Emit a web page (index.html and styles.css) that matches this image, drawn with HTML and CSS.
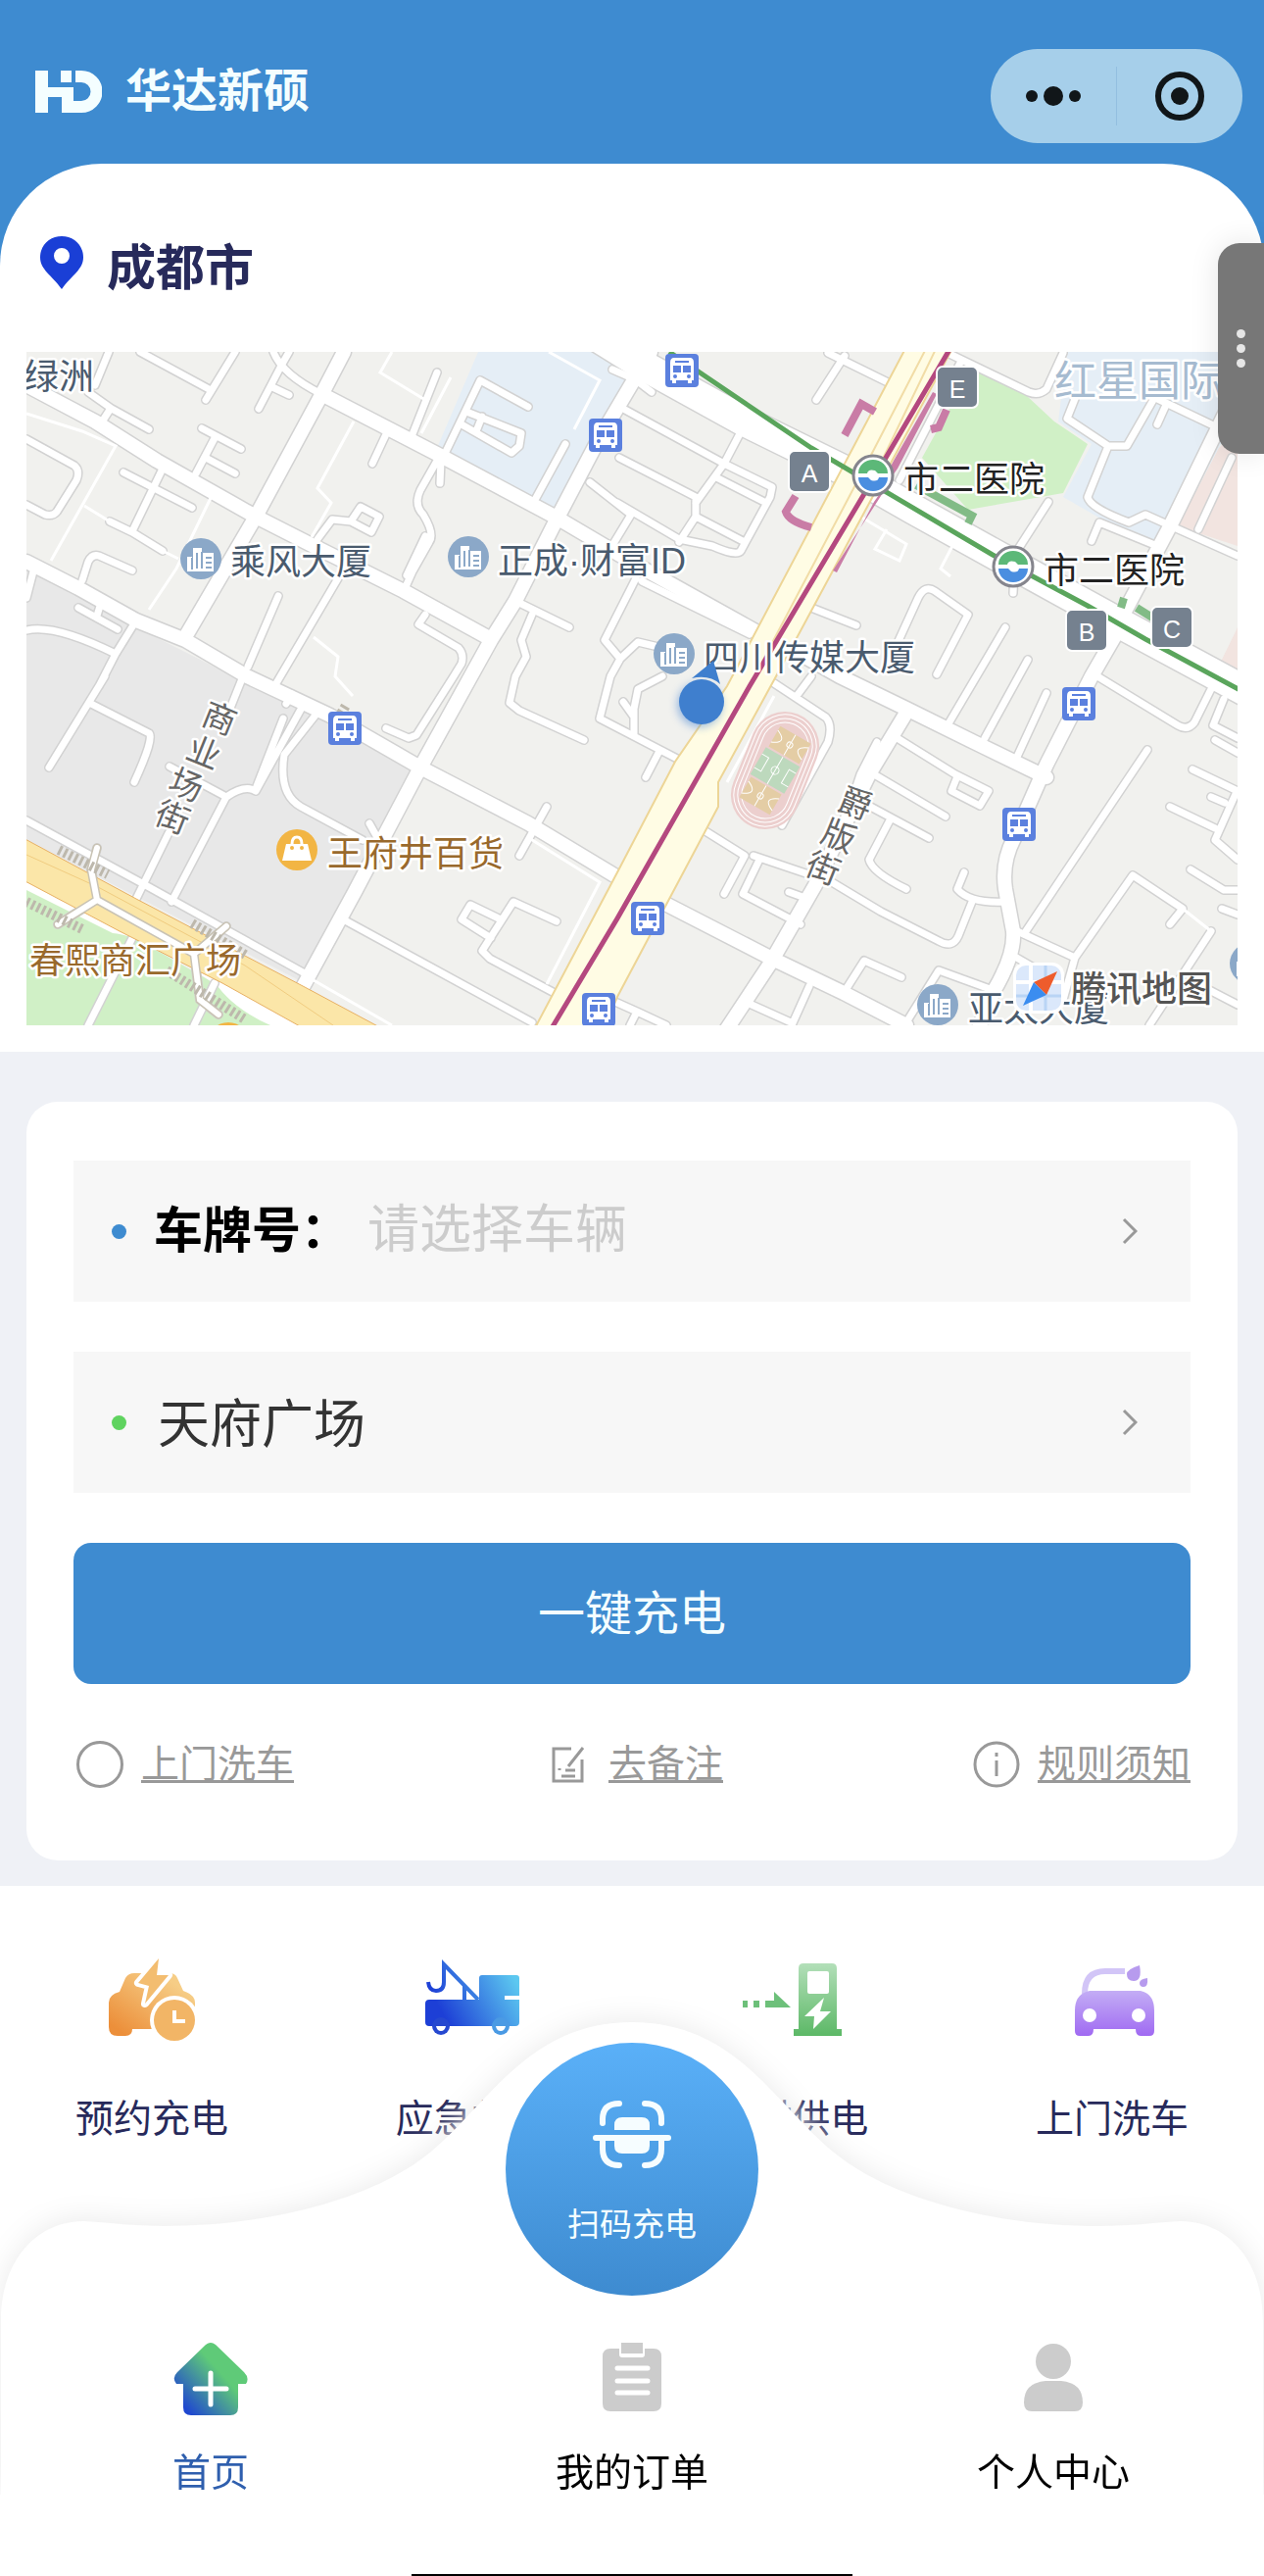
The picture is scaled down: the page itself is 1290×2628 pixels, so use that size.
FILE: index.html
```html
<!DOCTYPE html>
<html lang="zh-CN">
<head>
    <meta charset="UTF-8" />
    <meta name="viewport" content="width=device-width, initial-scale=1" />
    <title>华达新硕</title>
    <link rel="stylesheet" href="styles.css">
</head>
<body>
    <!--顶部-->
    <header class="header">
        <h1 class="brand">
            <svg class="brand-logo" viewBox="0 0 68 43" aria-hidden="true">
                <path d="M0 0h13v17h26v10H13v16H0z" fill="#f4feff"/>
                <path d="M26 0h11v12H26z" fill="#f4feff"/>
                <path d="M41 6h6a15.500 15.500 0 0 1 0 31H33V20" fill="none" stroke="#f4feff" stroke-width="12"/>
            </svg>
            华达新硕
        </h1>
        <div class="capsule">
            <button type="button" aria-label="更多">
                <svg width="60" height="60" viewBox="0 0 60 60"><circle cx="8" cy="30" r="6"/><circle cx="30" cy="30" r="10"/><circle cx="52" cy="30" r="6"/></svg>
            </button>
            <button type="button" aria-label="关闭">
                <svg width="60" height="60" viewBox="0 0 60 60"><circle cx="30" cy="30" r="22" fill="none" stroke="#111619" stroke-width="6"/><circle cx="30" cy="30" r="9"/></svg>
            </button>
        </div>
    </header>

    <!--定位和地图-->
    <section class="panel">
        <div class="city">
            <svg width="44" height="54" viewBox="0 0 44 54" aria-hidden="true"><path fill="#1a3fd6" fill-rule="evenodd" d="M22 0C10 0 0 9 0 21.500 0 34 12 40 22 54 32 40 44 34 44 21.500 44 9 34 0 22 0zm0 12a8 8 0 1 1 0 16 8 8 0 0 1 0-16z"/></svg>
            <span>成都市</span>
        </div>
        <svg class="map" viewBox="27 359 1236 687">
            <defs>
                <g id="road-s">
                    <path d="M111 359L97 393M90 400L114 417L152 438M112 418L103 432M143 359L215 398M240 359L210 408M295 359L287 373L264 417M278 395L295 403M279 359Q288 382 328 402"/>
                    <path d="M206 437L246 458M219 447L200 483M210 467L240 483M27 448L76 475Q82 480 78 490L58 522Q54 527 46 525L27 515M126 482L196 518M166 478L135 542M112 532L135 543L166 562M84 592L90 573Q94 565 101 567L135 582"/>
                    <path d="M324 550L339 530L358 532L379 543L387 527L368 517L358 532M394 443L380 473M446 380L421 443M539 415L490 388L452 467M476 420L532 442L530 455L522 462L471 433M492 425L486 440M577 453L547 508M625 377L648 387"/>
                    <path d="M446 470L429 500Q422 515 432 525Q444 545 438 553L421 583L412 603M450 470L449 493M434 547L415 587M434 627L427 637L468 661Q474 668 471 677L463 690L425 750L417 753L394 743M530 615L581 640M543 627L532 653L537 670L526 690L520 717L530 725L596 755M345 590L282 697M284 608L253 680"/>
                    <path d="M602 492L644 525L627 553M632 467L710 507V527L693 553M638 418L739 473L788 497L786 507L756 562Q752 568 727 557L693 550L630 513M760 433L739 473L710 513M731 487L782 513M710 527L760 553M648 387L665 400M862 363L833 408M845 360L910 392"/>
                    <path d="M655 593L765 647M649 590L617 653L633 672L651 655L672 660M633 672L623 690L612 733L693 775M672 768L659 793M676 690L651 703L647 723V750M636 716L646 730M828 620L874 638M905 680L937 610Q944 596 954 603L988 627L956 688M1026 640L967 740M1049 673L1005 753M1068 707L1038 772M1070 512L1036 565L1034 605"/>
                    <path d="M967 360L1050 400Q1060 404 1068 397L1085 360M980 370L918 490M1097 407L1089 427L1131 455H1150L1177 408M1173 403L1236 433M1190 413L1181 433M1131 455L1110 507Q1112 518 1152 533L1169 525L1263 567M1114 552L1122 533L1181 557M1257 467L1223 540"/>
                    <path d="M1120 690L1202 740Q1212 746 1219 737L1236 703M1249 713L1238 740L1263 753M1240 755L1263 768M1171 765L1047 950M1217 785L1263 807M1194 823L1240 845M1236 813L1250 819M1261 810L1240 857L1263 877M1215 887L1249 908H1263M1247 927L1263 933"/>
                    <path d="M1038 950L1097 977L1156 893L1207 927L1194 943M1097 977L1085 1020M1236 950L1173 1046M984 890L977 907Q990 922 1026 920M992 920L978 955Q972 968 958 960L899 930L849 900L769 873M775 877L758 912L817 943M805 910L819 915M720 848L760 873L739 912M1215 1000L1263 1025M1034 975L1060 990"/>
                    <path d="M895 757L878 790L868 820M914 752L975 790L1009 807L1000 822L971 807L977 792M887 787L965 833M883 820L948 855M908 837L887 877Q890 890 925 907M790 697L843 732Q850 740 845 757L798 842M828 690L813 710M767 1025L807 1043M826 1006L808 1046M861 1013L882 980L920 997M925 1043L958 990L1013 1010M630 1023L650 1032L643 1046M650 1032L680 1046"/>
                    <path d="M107 690L50 783M93 718L152 748Q158 752 137 798M27 837L143 900L311 993M248 690L234 725M172 850L139 917M231 813L175 920M173 782L231 813Q250 800 261 807L309 720M262 802L289 733M324 727L290 770Q284 810 307 823L370 857M292 718L298 708M377 840L387 858M139 633L118 667L101 700M27 643Q55 636 118 667M34 583L27 610M103 615L99 628M80 620L120 642"/>
                    <path d="M558 823L530 873M354 940L543 1043M568 940L524 920L492 970L500 978L564 1012M509 937L480 923L471 938L501 957M135 957L90 1046M219 1003L198 1046"/>
                    <path d="M99 865L93 887L99 918L59 943M99 918L198 973L231 945M198 973L204 1020L223 1035"/>
                </g>
                <g id="road-m">
                    <path d="M27 393L97 430L160 470L261 527L320 557L412 603L501 652M328 402L446 463L568 528L651 577L773 645M351 359L328 403L261 527L189 650M27 573L80 600L139 633L189 653L252 690L337 730L429 783L539 840L627 893M664 359L610 450L568 530L526 613L501 653L429 783L362 910L309 1007"/>
                    <path d="M1256 410L1194 537L1143 633M1143 640L1114 690L1068 780L1035 855Q1022 880 1026 907L1034 950Q1036 975 1013 1013L1000 1046M795 655L857 690L925 723L1000 760L1068 793M681 923L786 977L861 1013L925 1046M925 727L887 790L832 903L786 983L735 1060"/>
                </g>
                <g id="road-l"><path d="M610 344L655 372L760 430L870 484L933 520L1034 576L1143 636L1280 710"/></g>
                <symbol id="bus" viewBox="0 0 34 34">
                    <rect width="34" height="34" rx="4" fill="#5b80de"/>
                    <path fill="#fff" d="M9 4h16q4 0 4 5v18h-2v3h-4v-3H11v3H7v-3H5V9q0-5 4-5z"/>
                    <path fill="#5b80de" d="M10 7h14v2H10zM8 12h8v7H8zm10 0h8v7h-8z"/><circle cx="10" cy="23" r="2" fill="#5b80de"/><circle cx="24" cy="23" r="2" fill="#5b80de"/>
                </symbol>
                <symbol id="tower" viewBox="0 0 44 44">
                    <circle cx="22" cy="22" r="21" fill="#8ba8c8"/>
                    <path fill="#fff" d="M8 20h5v12H8zm6-9h9v5h12v19H8v-3h6z"/>
                    <path stroke="#8ba8c8" stroke-width="2" d="M13 21v12M18 16v16M23 15v17M27 21h6M27 26h6M27 31h6"/>
                </symbol>
                <symbol id="metro" viewBox="0 0 46 46">
                    <circle cx="23" cy="23" r="20" fill="#fff" stroke="#85858d" stroke-width="3"/>
                    <path fill="#5cb878" d="M8 21a15 14 0 0 1 30 0H28l-3-3q-7-2-8 3z"/>
                    <path fill="#4a8ee0" d="M38 25a15 14 0 0 1-30 0h10l3 3q7 2 8-3z"/>
                </symbol>
            </defs>
            <rect x="27" y="359" width="1236" height="687" fill="#f1f1ee"/>
            <path fill="#e8e8e8" d="M27 580L139 640L252 697L337 737L424 787L311 1003L27 857z"/>
            <path fill="#e5eef6" d="M488 359H630L650 375L568 525L446 457zM1089 359H1263V420L1202 537L1177 560L1085 507L1114 453L1080 430z"/>
            <path fill="#f2e4e0" d="M1244 457L1263 440V557L1202 537zM1263 640L1246 675L1263 690z"/>
            <path fill="#d0f0c6" d="M996 378L1047 403L1076 430L1110 453L1085 503L988 520L941 467L967 420zM27 905L122 948L222 1005L280 1046H27z"/>
            <path fill="#fff" d="M27 896L122 946L227 1000L320 1046H276Q240 1030 222 1006Q150 955 115 952L27 908z"/>

            <use href="#road-l" class="edge road-l"/>
            <use href="#road-s" class="edge road-s"/>
            <use href="#road-m" class="edge road-m"/>
            <use href="#road-l" class="fill road-l"/>
            <use href="#road-s" class="fill road-s"/>
            <use href="#road-m" class="fill road-m"/>
            <path class="lane" d="M27 422L84 440L118 455L52 572M86 516L112 532M215 508L180 580L152 622M361 430L324 498L338 513L318 548M400 359L388 380L434 408M460 385L430 442M560 359L612 388L586 438M320 650L345 670L342 690L360 710M320 1000L400 1046M540 855L612 900L558 1004M790 710L742 798M880 528L925 555L918 572L893 560L905 540M972 557L960 580L970 588M1207 927L1236 950M166 562L182 570"/>

            <path fill="#fbe6a8" stroke="#e7b064" d="M20 853L139 917L311 1007L395 1052H315L227 1003L122 950L20 896z"/>
            <path fill="none" stroke="#f0cc80" d="M27 872L100 905L250 985L340 1046"/>
            <path class="bridge-edge" d="M99 865L93 887L99 918L59 943M99 918L198 973L231 945M198 973L204 1020L223 1035"/>
            <path class="bridge" d="M99 865L93 887L99 918L59 943M99 918L198 973L231 945M198 973L204 1020L223 1035"/>
            <path class="stairs" d="M60 867L110 892M27 920L84 948M196 942L252 975M170 990L250 1040M348 728L354 718"/>

            <path fill="#fffce4" stroke="#edd596" stroke-width="2" d="M927 350L742 700L689 777L630 890L540 1060H612L630 1017L733 823V798L792 690L975 350z"/>
            <path fill="none" stroke="#f1dca6" stroke-width="2" d="M948 350L886 470L770 690M958 350L900 470"/>
            <path fill="#c97ca6" d="M952 400L912 470L903 487L908 492L850 582L854 584L892 512L916 478L956 402z"/>
            <path fill="none" stroke="#c97ca6" stroke-width="8" d="M862 444L879 412L893 420M966 418L958 436L950 438M812 506L802 522Q805 532 828 538"/>
            <path fill="none" stroke="#82bb86" stroke-width="8" d="M935 495L992 526L988 534M1147 610L1144 620M1160 620L1176 630"/>

            <!--运动场-->
            <g transform="translate(791 786) rotate(22)">
                <rect x="-35" y="-62" width="70" height="124" rx="35" fill="#eccfce"/>
                <rect x="-32" y="-59" width="64" height="118" rx="32" class="track"/>
                <rect x="-28" y="-55" width="56" height="110" rx="28" class="track"/>
                <rect x="-24" y="-51" width="48" height="102" rx="24" class="track"/>
                <g transform="rotate(8)">
                    <path d="M-18-42h36v24h-36zM-18 18h36v24h-36z" fill="#e4cda5"/><path d="M-20-16h40v32h-40z" fill="#bdd9bd"/>
                    <path class="track" d="M0-42v24M0-16v32M0 18v24M-20-8h8v16h-8M20-8h-8v16h8M-18-37q16 7 0 14M18-37q-16 7 0 14M-18 23q16 7 0 14M18 23q-16 7 0 14"/><circle r="4" class="track"/><circle cy="-30" r="3" class="track"/><circle cy="30" r="3" class="track"/>
                </g>
            </g>

            <!--地铁线-->
            <path fill="none" stroke="#5aa55c" stroke-width="5" d="M683 359L828 457L891 494L1013 566L1110 618L1169 652L1275 709"/>
            <path fill="none" stroke="#b4487f" stroke-width="5" d="M970 355L904 467L765 700L630 937L560 1054"/>

            <use href="#bus" x="679" y="361" width="34" height="34"/>
            <use href="#bus" x="601" y="427" width="34" height="34"/>
            <use href="#bus" x="335" y="726" width="34" height="34"/>
            <use href="#bus" x="1084" y="701" width="34" height="34"/>
            <use href="#bus" x="1023" y="824" width="34" height="34"/>
            <use href="#bus" x="644" y="920" width="34" height="34"/>
            <use href="#bus" x="594" y="1013" width="34" height="34"/>
            <use href="#tower" x="183" y="548" width="44" height="44"/>
            <use href="#tower" x="456" y="546" width="44" height="44"/>
            <use href="#tower" x="666" y="645" width="44" height="44"/>
            <use href="#tower" x="935" y="1003" width="44" height="44"/>
            <use href="#tower" x="1254" y="961" width="44" height="44"/>
            <use href="#metro" x="868" y="462" width="46" height="46"/>
            <use href="#metro" x="1011" y="555" width="46" height="46"/>

            <g class="exit">
                <rect x="805" y="460" width="42" height="42" rx="6"/><text x="826" y="492">A</text>
                <rect x="956" y="374" width="42" height="42" rx="6"/><text x="977" y="406">E</text>
                <rect x="1088" y="622" width="42" height="42" rx="6"/><text x="1109" y="654">B</text>
                <rect x="1175" y="619" width="42" height="42" rx="6"/><text x="1196" y="651">C</text>
            </g>

            <circle cx="303" cy="867" r="21" fill="#f2b544"/>
            <path fill="#fff" d="M292 861h22l4 17h-30z"/><path fill="none" stroke="#fff" stroke-width="3" d="M298 861q0-7 5-7t5 7"/>
            <circle cx="298" cy="865" r="2" fill="#f2b544"/><circle cx="308" cy="865" r="2" fill="#f2b544"/>
            <circle cx="233" cy="1064" r="21" fill="#f2b544"/>

            <g class="poi">
                <text x="24" y="397">绿洲</text>
                <text x="235" y="586">乘风大厦</text>
                <text x="508" y="585">正成·财富ID</text>
                <text x="718" y="684">四川传媒大厦</text>
                <text x="988" y="1042">亚太大厦</text>
            </g>
            <g class="poi poi-metro">
                <text x="922" y="502">市二医院</text>
                <text x="1065" y="595">市二医院</text>
            </g>
            <g class="poi poi-shop">
                <text x="334" y="884">王府井百货</text>
                <text x="30" y="993">春熙商汇广场</text>
            </g>
            <g class="poi poi-area"><text x="1076" y="404">红星国际</text></g>
            <g class="poi poi-street">
                <text transform="translate(224 733) rotate(22)" y="12">商</text>
                <text transform="translate(208 768) rotate(22)" y="12">业</text>
                <text transform="translate(190 801) rotate(22)" y="12">场</text>
                <text transform="translate(176 834) rotate(22)" y="12">街</text>
                <text transform="translate(873 820) rotate(22)" y="12">爵</text>
                <text transform="translate(856 853) rotate(22)" y="12">版</text>
                <text transform="translate(840 886) rotate(22)" y="12">街</text>
            </g>

            <!--当前位置-->
            <circle cx="714" cy="719" r="23" class="glow"/>
            <path fill="#3f7fce" d="M728 674L735 698Q724 688 706 692z"/>
            <circle cx="716" cy="716" r="23" fill="#3f7fce"/>

            <rect x="1034" y="982" width="52" height="52" rx="12" fill="#fff"/>
            <rect x="1037" y="985" width="46" height="46" rx="10" fill="#dbe8fb"/>
            <path stroke="#fff" stroke-width="4" d="M1052 985v46M1037 1002h46"/><path stroke="#b9d4f5" stroke-width="3" d="M1067 985v46M1037 1016h46"/>
            <path fill="#ee5c2c" d="M1079 991L1068 1015L1055 1002z"/><path fill="#3b8df0" d="M1044 1026L1055 1002L1068 1015z"/>
            <g class="poi poi-logo"><text x="1093" y="1022">腾讯地图</text></g>
        </svg>
    </section>
    <button class="handle" type="button" aria-label="展开"><i></i><i></i><i></i></button>

    <!--下单-->
    <main class="order">
        <form class="card">
            <label class="field">
                <i class="dot"></i>
                <span class="field-name">车牌号：</span>
                <input type="text" placeholder="请选择车辆" readonly>
                <svg class="arrow" viewBox="0 0 16 28" aria-hidden="true"><path d="M2 2l12 12L2 26"/></svg>
            </label>
            <label class="field">
                <i class="dot dot-green"></i>
                <input type="text" value="天府广场" aria-label="充电地点" readonly>
                <svg class="arrow" viewBox="0 0 16 28" aria-hidden="true"><path d="M2 2l12 12L2 26"/></svg>
            </label>
            <button class="submit" type="button">一键充电</button>
            <div class="extras">
                <label class="extra"><input type="radio" name="wash"><span>上门洗车</span></label>
                <a class="extra" href="#">
                    <svg viewBox="0 0 48 48" aria-hidden="true"><path d="M28 8H10v33h29V19M40 7L25 26M16 28v2M18 36h14M22 30h10"/></svg>
                    <span>去备注</span>
                </a>
                <a class="extra" href="#">
                    <svg viewBox="0 0 48 48" aria-hidden="true"><circle cx="24" cy="24" r="22"/><path d="M24 20v16M24 12v4"/></svg>
                    <span>规则须知</span>
                </a>
            </div>
        </form>
    </main>

    <!--服务入口-->
    <section class="services">
        <a href="#">
            <svg viewBox="0 0 102 102" aria-hidden="true">
                <defs><linearGradient id="g1" x1="0" y1="1" x2="1" y2="0"><stop offset=".1" stop-color="#ec8f3a"/><stop offset=".8" stop-color="#f6cd86"/></linearGradient></defs>
                <path fill="url(#g1)" d="M18 42l6-14q3-5 9-5h36q6 0 8 5l6 13q12 4 12 12v27H31q0 7-7 7h-8q-9 0-9-9V53q0-8 11-11z"/>
                <path fill="#fff" stroke="#fff" stroke-width="8" stroke-linejoin="round" d="M58 9L37 33l11 3-4 18 24-29H56z"/>
                <path fill="#f3bd70" d="M58 8L37 33l11 3-4 18 24-29H56z"/>
                <circle cx="74" cy="71" r="25" fill="#fff"/><circle cx="74" cy="71" r="21" fill="#f2b566"/>
                <path fill="none" stroke="#fff" stroke-width="4" d="M74 61v11h11"/>
            </svg>
            <span>预约充电</span>
        </a>
        <a href="#">
            <svg viewBox="0 0 102 102" aria-hidden="true">
                <defs><linearGradient id="g2" gradientUnits="userSpaceOnUse" x1="10" y1="75" x2="95" y2="30"><stop offset=".15" stop-color="#1d3fd6"/><stop offset="1" stop-color="#5cc8f0"/></linearGradient></defs>
                <path fill="none" stroke="url(#g2)" stroke-width="4" d="M6 32q1 9 8 9 8 0 8-9V14l35 36M43 36v15"/>
                <path fill="url(#g2)" d="M7 50h51V28q0-3 3-3h35q3 0 3 3v45q0 4-4 4H7q-4 0-4-4V54q0-4 4-4z"/>
                <path stroke="#fff" stroke-width="4" d="M84 48h15"/>
                <circle cx="19" cy="77" r="9" fill="#2548d0"/><circle cx="80" cy="77" r="9" fill="#4a9ae4"/>
                <path fill="#fff" d="M14 77h10q-1 5-5 5t-5-5zM75 77h10q-1 5-5 5t-5-5z"/>
            </svg>
            <span>应急救援</span>
        </a>
        <a href="#">
            <svg viewBox="0 0 102 102" aria-hidden="true">
                <defs><linearGradient id="g3" x1="0" y1="0" x2="0" y2="1"><stop offset="0" stop-color="#b3dfb9"/><stop offset="1" stop-color="#5cb866"/></linearGradient></defs>
                <path fill="url(#g3)" fill-rule="evenodd" d="M63 13h29q5 0 5 5v62h5v7H53v-7h5V18q0-5 5-5zm6 8q-2 0-2 2v19q0 2 2 2h18q2 0 2-2V23q0-2-2-2zM84 48L64 67h10l-1 13 18-18H80z"/>
                <path fill="#6dc07a" d="M1 51h5v7H1zm11 0h6v7h-6zm12 0h9v-9l17 16H24z"/>
            </svg>
            <span>临时供电</span>
        </a>
        <a href="#">
            <svg viewBox="0 0 102 102" aria-hidden="true">
                <defs><linearGradient id="g4" x1="0" y1="0" x2="0" y2="1"><stop offset="0" stop-color="#c3adf5"/><stop offset="1" stop-color="#a06af2"/></linearGradient></defs>
                <path fill="none" stroke="#d2c5f7" stroke-width="6" d="M23 44Q23 21 44 21h20"/>
                <path fill="url(#g4)" d="M28 41h52q14 3 14 20v21q0 5-5 5h-9q-5 0-5-7H32q0 7-5 7h-9q-5 0-5-5V61q0-17 15-20z"/>
                <circle cx="28" cy="66" r="7" fill="#fff"/><circle cx="78" cy="66" r="7" fill="#fff"/>
                <path fill="#b79bee" d="M79 15q3 16-6 16-7 0-7-7 0-5 13-9zM87 28q1 9-4 9-4 0-4-4t8-5z"/>
            </svg>
            <span>上门洗车</span>
        </a>
    </section>

    <!--底部导航-->
    <nav class="tabbar">
        <svg class="tabbar-bg" viewBox="0 0 1290 482" preserveAspectRatio="none" aria-hidden="true">
            <path fill="#fff" d="M1 482V305C1 240 40 203 85 203C110 204 135 208 168 208C270 208 380 182 440 132C500 82 540 0 645 0C750 0 790 82 850 132C910 182 1020 208 1122 208C1155 208 1180 204 1205 203C1250 203 1289 240 1289 305V482z"/>
        </svg>
        <button class="scan" type="button">
            <svg width="80" height="72" viewBox="0 0 80 72" aria-hidden="true">
                <g fill="none" stroke="#f6fdff" stroke-width="6" stroke-linecap="round"><path d="M10 24V20Q10 4 27 4M70 24V20Q70 4 53 4M10 42v8q0 17 17 17M70 42v8q0 17-17 17M3 39h74"/></g>
                <path fill="#f6fdff" d="M22 31v-5q0-8 8-8h20q8 0 8 8v5zM22 42h36v5q0 8-8 8H30q-8 0-8-8z"/>
            </svg>
            扫码充电
        </button>
        <ul class="tabs">
            <li class="on"><a href="#">
                <svg viewBox="0 0 80 80" aria-hidden="true">
                    <defs><linearGradient id="g5" x1="0" y1=".9" x2=".8" y2=".2"><stop offset=".1" stop-color="#1f47d0"/><stop offset=".75" stop-color="#5fca78"/></linearGradient></defs>
                    <path fill="url(#g5)" d="M35 5q5-4 10 0l29 28q6 6 2 12h-8v24q0 8-8 8H20q-8 0-8-8V45H5q-5-6 1-12z"/>
                    <path stroke="#fff" stroke-width="5" stroke-linecap="round" d="M40 34v32M24 50h32"/>
                </svg>
                首页</a></li>
            <li><a href="#">
                <svg viewBox="0 0 80 80" aria-hidden="true">
                    <path fill="#ccc" d="M18 9h9v6q0 3 3 3h20q3 0 3-3V9h9q8 0 8 8v48q0 8-8 8H18q-8 0-8-8V17q0-8 8-8z"/><path fill="#ccc" d="M29 3h22v11H29z"/>
                    <path stroke="#fff" stroke-width="5" stroke-linecap="round" d="M25 29h31M25 42h31M25 54h31"/>
                </svg>
                我的订单</a></li>
            <li><a href="#">
                <svg viewBox="0 0 80 80" aria-hidden="true"><circle cx="40" cy="22" r="18" fill="#ccc"/><path fill="#ccc" d="M32 42h16q22 2 22 22 0 9-8 9H18q-8 0-8-9 0-20 22-22z"/></svg>
                个人中心</a></li>
        </ul>
        <div class="home-line"></div>
    </nav>
</body>
</html>
```
FILE: styles.css
```css
*{
    margin:0;
    padding:0;
    box-sizing: border-box;
}
body{
    background-color: #fff;
    font-family: "Liberation Sans", "Noto Sans CJK SC", sans-serif;
    color: #000;
}
a{
    color: inherit;
    text-decoration: none;
}
button, input{
    font-family: inherit;
    border: none;
    background: none;
}
svg{
    display: block;
    flex: none;
}

/*顶部*/
.header{
    display: flex;
    justify-content: space-between;
    align-items: flex-start;
    height: 287px;
    padding: 50px 22px 0 36px;
    background-color: #3e8bd0;
}
.brand{
    display: flex;
    align-items: center;
    gap: 24px;
    height: 86px;
    font-size: 47px;
    line-height: 60px;
    color: #f4feff;
}
.brand-logo{
    width: 68px;
    height: 43px;
}
.capsule{
    display: flex;
    align-items: center;
    width: 257px;
    height: 96px;
    border-radius: 48px;
    background-color: #a6cfea;
}
.capsule button{
    display: flex;
    justify-content: center;
    flex: 1;
    fill: #111619;
}
.capsule button + button{
    border-left: 1px solid #93bfe0;
}

/*定位和地图*/
.panel{
    margin-top: -120px;
    padding: 72px 27px 27px;
    border-radius: 104px 104px 0 0;
    background-color: #fff;
}
.city{
    display: flex;
    align-items: flex-start;
    gap: 24px;
    height: 120px;
    padding: 2px 0 0 14px;
    font-size: 50px;
    font-weight: bold;
    line-height: 66px;
    color: #272a5b;
}
.map{
    width: 100%;
    height: auto;
}
.edge, .fill{
    fill: none;
    stroke-linejoin: round;
    stroke-linecap: round;
}
.edge{
    stroke: #d2d2d2;
}
.fill{
    stroke: #fff;
}
.edge.road-s{
    stroke-width: 10px;
}
.fill.road-s{
    stroke-width: 7px;
}
.edge.road-m{
    stroke-width: 17px;
}
.fill.road-m{
    stroke-width: 14px;
}
.edge.road-l{
    stroke-width: 33px;
}
.fill.road-l{
    stroke-width: 30px;
}
.lane{
    fill: none;
    stroke: #fff;
    stroke-width: 3px;
}
.bridge, .bridge-edge{
    fill: none;
    stroke: #fff;
    stroke-width: 6px;
    stroke-linecap: round;
}
.bridge-edge{
    stroke: #c9c3b4;
    stroke-width: 9px;
}
.stairs{
    fill: none;
    stroke: #bdb8ac;
    stroke-width: 10px;
    stroke-dasharray: 3 3;
}
.track{
    fill: none;
    stroke: #fff;
    stroke-width: 1px;
}
.glow{
    fill: #4180d2;
    opacity: .5;
    filter: blur(4px);
}
.exit rect{
    fill: #75818f;
    stroke: #fff;
    stroke-width: 2px;
}
.exit text{
    fill: #fff;
    font-size: 25px;
    text-anchor: middle;
}
.poi text{
    fill: #4a5b6e;
    stroke: #fff;
    stroke-width: 5px;
    stroke-linejoin: round;
    paint-order: stroke;
    font-size: 36px;
}
.poi-metro text{
    fill: #222;
}
.poi-shop text{
    fill: #99692c;
}
.poi-area text{
    fill: #a6bbd0;
    font-size: 43px;
}
.poi-street text{
    fill: #666;
    font-size: 34px;
    text-anchor: middle;
}
.poi-logo text{
    fill: #555;
    font-weight: 500;
}
.handle{
    position: absolute;
    top: 248px;
    right: 0;
    display: flex;
    flex-direction: column;
    align-items: center;
    justify-content: center;
    gap: 6px;
    width: 47px;
    height: 215px;
    border-radius: 22px 0 0 22px;
    background-color: #777;
    box-shadow: 0 0 30px rgba(0,0,0,.1);
}
.handle i{
    width: 9px;
    height: 9px;
    border-radius: 50%;
    background-color: #e6e6e6;
}

/*下单*/
.order{
    padding: 51px 27px 26px;
    background-color: #eff1f6;
}
.card{
    display: flex;
    flex-direction: column;
    gap: 51px;
    padding: 60px 48px 68px;
    border-radius: 32px;
    background-color: #fff;
}
.field{
    display: flex;
    align-items: center;
    height: 144px;
    padding: 0 54px 0 39px;
    background-color: #f7f7f7;
}
.dot{
    width: 15px;
    height: 15px;
    margin-right: 28px;
    border-radius: 50%;
    background-color: #3e8bd0;
}
.dot-green{
    margin-right: 32px;
    background-color: #5fd35f;
}
.field-name{
    margin-right: 18px;
    font-size: 50px;
    font-weight: bold;
    line-height: 72px;
}
.field input{
    flex: 1;
    min-width: 0;
    height: 80px;
    padding-bottom: 4px;
    font-size: 53px;
    color: #333;
    outline: none;
}
.field input::placeholder{
    color: #ccc;
    opacity: 1;
}
.arrow{
    width: 16px;
    height: 28px;
    fill: none;
    stroke: #999;
    stroke-width: 3px;
}
.submit{
    height: 144px;
    padding-bottom: 8px;
    border-radius: 18px;
    background-color: #3e8bd0;
    font-size: 48px;
    color: #f4feff;
}
.extras{
    display: flex;
    justify-content: space-between;
    padding-left: 3px;
}
.extra{
    display: flex;
    align-items: center;
    gap: 18px;
    height: 61px;
    font-size: 39px;
    line-height: 60px;
    color: #999;
}
.extra span{
    text-decoration: underline;
    text-decoration-thickness: 3px;
    text-underline-offset: 3px;
}
.extra input{
    appearance: none;
    width: 48px;
    height: 48px;
    border: 3px solid #999;
    border-radius: 50%;
}
.extra svg{
    width: 48px;
    height: 48px;
    fill: none;
    stroke: #999;
    stroke-width: 3px;
}

/*服务入口*/
.services{
    display: flex;
    justify-content: space-between;
    padding: 66px 77px 420px;
}
.services a{
    display: flex;
    flex-direction: column;
    align-items: center;
    gap: 40px;
    font-size: 39px;
    line-height: 60px;
    color: #272a5b;
}
.services svg{
    width: 102px;
    height: 102px;
}

/*底部导航*/
.tabbar{
    position: fixed;
    left: 0;
    right: 0;
    bottom: 0;
    height: 565px;
}
.tabbar-bg{
    position: absolute;
    left: 0;
    top: 0;
    width: 100%;
    height: 482px;
    overflow: visible;
    filter: drop-shadow(0 -2px 14px #ebebeb);
}
.tabbar::after{
    content: "";
    position: absolute;
    left: 0;
    right: 0;
    top: 482px;
    bottom: 0;
    background-color: #fff;
}
.scan{
    position: relative;
    display: flex;
    flex-direction: column;
    align-items: center;
    gap: 26px;
    width: 258px;
    height: 258px;
    margin: 21px auto 45px;
    padding-top: 58px;
    border-radius: 50%;
    background-image: linear-gradient(#5ab0f8, #3e8bd0);
    font-size: 33px;
    line-height: 60px;
    color: #f4feff;
}
.tabs{
    position: relative;
    z-index: 1;
    display: flex;
    list-style: none;
}
.tabs li{
    flex: 1;
}
.tabs a{
    display: flex;
    flex-direction: column;
    align-items: center;
    gap: 26px;
    font-size: 39px;
    line-height: 60px;
}
.tabs svg{
    width: 80px;
    height: 80px;
}
.tabs .on{
    color: #2f5fae;
}
.home-line{
    position: absolute;
    left: 50%;
    bottom: 0;
    z-index: 1;
    width: 450px;
    height: 2px;
    margin-left: -225px;
    background-color: #000;
}
```
